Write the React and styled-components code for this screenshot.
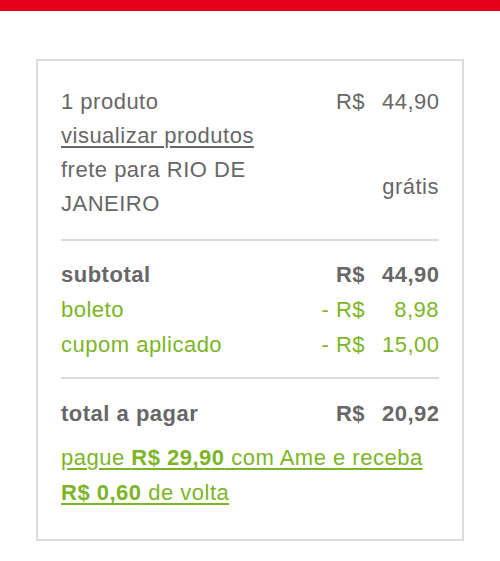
import React from "react";
import styled, { createGlobalStyle } from "styled-components";

const gray = "#676767";
const green = "#7cb526";
const line = "#dcdcdc";

const GlobalStyle = createGlobalStyle`
  body {
    margin: 0;
    background: #fff;
    font-family: "Liberation Sans", Arial, sans-serif;
  }
`;

const TopBar = styled.div`
  height: 11px;
  background: #e50017;
`;

const Card = styled.div`
  margin: 48px 36px 0;
  border: 2px solid ${line};
  padding: 24px 23px 29px;
  color: ${gray};
  font-size: 22px;
  letter-spacing: 0.5px;
`;

const Section = styled.div`
  display: grid;
  grid-template-columns: 1fr auto 57px;
  column-gap: 17px;
  line-height: ${(p) => p.$lh || 34}px;
  padding: ${(p) => p.$pad || "0"};
  border-bottom: ${(p) => (p.$divider ? `2px solid ${line}` : "none")};
`;

const Label = styled.div`
  grid-column: 1;
  font-weight: ${(p) => (p.$bold ? 700 : 400)};
  color: ${(p) => (p.$green ? green : gray)};
`;

const Currency = styled.div`
  grid-column: 2;
  text-align: right;
  font-weight: ${(p) => (p.$bold ? 700 : 400)};
  color: ${(p) => (p.$green ? green : gray)};
`;

const Amount = styled.div`
  grid-column: 3;
  text-align: right;
  font-weight: ${(p) => (p.$bold ? 700 : 400)};
  color: ${(p) => (p.$green ? green : gray)};
`;

const Wide = styled.div`
  grid-column: 2 / 4;
  text-align: right;
  align-self: center;
`;

const ViewLink = styled.a`
  grid-column: 1 / 4;
  color: ${gray};
  text-decoration: underline;
  text-underline-offset: 3px;
`;

const Promo = styled.a`
  display: block;
  margin-top: 9px;
  color: ${green};
  line-height: 35px;
  text-decoration: underline;
  text-underline-offset: 3px;
  b {
    font-weight: 700;
  }
`;

const Money = ({ cur, value, bold, green }) => (
  <>
    <Currency $bold={bold} $green={green}>{cur}</Currency>
    <Amount $bold={bold} $green={green}>{value}</Amount>
  </>
);

export default function App() {
  return (
    <>
      <GlobalStyle />
      <TopBar />
      <Card>
        <Section $divider $pad="0 0 18px">
          <Label>1 produto</Label>
          <Money cur="R$" value="44,90" />
          <ViewLink>visualizar produtos</ViewLink>
          <Label>frete para RIO DE JANEIRO</Label>
          <Wide>grátis</Wide>
        </Section>
        <Section $divider $lh={35} $pad="16px 0 15px">
          <Label $bold>subtotal</Label>
          <Money cur="R$" value="44,90" bold />
          <Label $green>boleto</Label>
          <Money cur="- R$" value="8,98" green />
          <Label $green>cupom aplicado</Label>
          <Money cur="- R$" value="15,00" green />
        </Section>
        <Section $pad="18px 0 0">
          <Label $bold>total a pagar</Label>
          <Money cur="R$" value="20,92" bold />
        </Section>
        <Promo>
          pague <b>R$ 29,90</b> com Ame e receba <b>R$ 0,60</b> de volta
        </Promo>
      </Card>
    </>
  );
}
